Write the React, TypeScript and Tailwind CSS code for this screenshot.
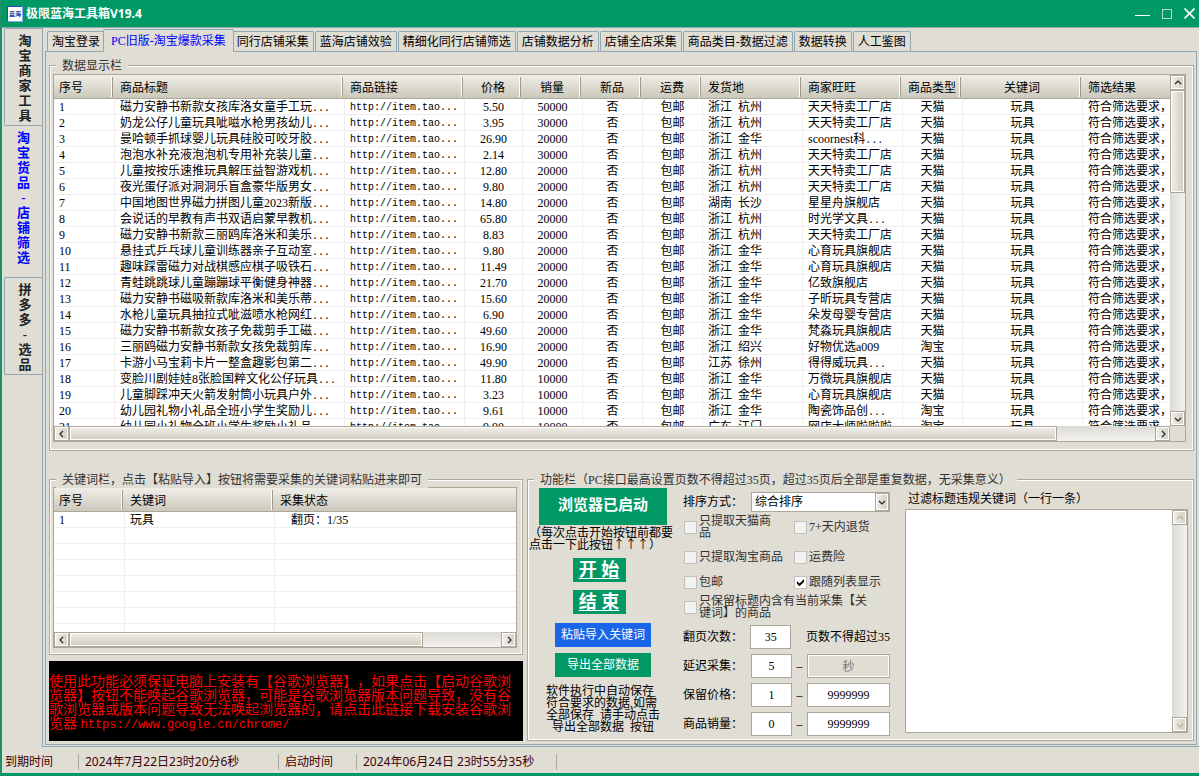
import React, { useState } from "react";
import clsx from "clsx";

const mono = "font-['Liberation_Mono','Noto_Sans_CJK_SC',monospace] text-[10px]";

const sideTabs = ["淘宝商家工具", "淘宝货品-店铺筛选", "拼多多-选品"];

const topTabs = [
  "淘宝登录",
  "PC旧版-淘宝爆款采集",
  "同行店铺采集",
  "蓝海店铺效验",
  "精细化同行店铺筛选",
  "店铺数据分析",
  "店铺全店采集",
  "商品类目-数据过滤",
  "数据转换",
  "人工鉴图",
];

const columns = [
  { name: "序号", width: "w-[61px]", align: "text-left" },
  { name: "商品标题", width: "w-[230px]", align: "text-left" },
  { name: "商品链接", width: "w-[120px]", align: "text-left" },
  { name: "价格", width: "w-[58px]", align: "text-center" },
  { name: "销量", width: "w-[60px]", align: "text-center" },
  { name: "新品", width: "w-[60px]", align: "text-center" },
  { name: "运费", width: "w-[60px]", align: "text-center" },
  { name: "发货地", width: "w-[100px]", align: "text-left" },
  { name: "商家旺旺", width: "w-[100px]", align: "text-left" },
  { name: "商品类型", width: "w-[60px]", align: "text-center" },
  { name: "关键词", width: "w-[120px]", align: "text-center" },
  { name: "筛选结果", width: "", align: "text-left" },
];

const keywordColumns = [
  { name: "序号", width: "w-[71px]", align: "text-left" },
  { name: "关键词", width: "w-[150px]", align: "text-left" },
  { name: "采集状态", width: "", align: "text-left" },
];

// title, price, sales, province, city, shop, type
const goods = [
  ["磁力安静书新款女孩库洛女童手工玩...", "5.50", "50000", "浙江", "杭州", "天天特卖工厂店", "天猫"],
  ["奶龙公仔儿童玩具呲嗞水枪男孩幼儿...", "3.95", "30000", "浙江", "杭州", "天天特卖工厂店", "天猫"],
  ["曼哈顿手抓球婴儿玩具硅胶可咬牙胶...", "26.90", "20000", "浙江", "金华", "scoornest科...", "天猫"],
  ["泡泡水补充液泡泡机专用补充装儿童...", "2.14", "30000", "浙江", "杭州", "天天特卖工厂店", "天猫"],
  ["儿童按按乐速推玩具解压益智游戏机...", "12.80", "20000", "浙江", "杭州", "天天特卖工厂店", "天猫"],
  ["夜光蛋仔派对洞洞乐盲盒豪华版男女...", "9.80", "20000", "浙江", "杭州", "天天特卖工厂店", "天猫"],
  ["中国地图世界磁力拼图儿童2023新版...", "14.80", "20000", "湖南", "长沙", "星星舟旗舰店", "天猫"],
  ["会说话的早教有声书双语启蒙早教机...", "65.80", "20000", "浙江", "杭州", "时光学文具...", "天猫"],
  ["磁力安静书新款三丽鸥库洛米和美乐...", "8.83", "20000", "浙江", "杭州", "天天特卖工厂店", "天猫"],
  ["悬挂式乒乓球儿童训练器亲子互动室...", "9.80", "20000", "浙江", "金华", "心育玩具旗舰店", "天猫"],
  ["趣味踩雷磁力对战棋感应棋子吸铁石...", "11.49", "20000", "浙江", "金华", "心育玩具旗舰店", "天猫"],
  ["青蛙跳跳球儿童蹦蹦球平衡健身神器...", "21.70", "20000", "浙江", "金华", "亿致旗舰店", "天猫"],
  ["磁力安静书磁吸新款库洛米和美乐蒂...", "15.60", "20000", "浙江", "金华", "子昕玩具专营店", "天猫"],
  ["水枪儿童玩具抽拉式呲滋喷水枪网红...", "6.90", "20000", "浙江", "金华", "朵发母婴专营店", "天猫"],
  ["磁力安静书新款女孩子免裁剪手工磁...", "49.60", "20000", "浙江", "金华", "梵淼玩具旗舰店", "天猫"],
  ["三丽鸥磁力安静书新款女孩免裁剪库...", "16.90", "20000", "浙江", "绍兴", "好物优选a009", "淘宝"],
  ["卡游小马宝莉卡片一整盒趣影包第二...", "49.90", "20000", "江苏", "徐州", "得得威玩具...", "天猫"],
  ["变脸川剧娃娃8张脸国粹文化公仔玩具...", "11.80", "10000", "浙江", "金华", "万微玩具旗舰店", "天猫"],
  ["儿童脚踩冲天火箭发射筒小玩具户外...", "3.23", "10000", "浙江", "金华", "心育玩具旗舰店", "天猫"],
  ["幼儿园礼物小礼品全班小学生奖励儿...", "9.61", "10000", "浙江", "金华", "陶瓷饰品创...", "淘宝"],
  ["幼儿园小礼物全班小学生奖励小礼品...", "9.90", "10000", "广东", "江门", "网店大师啦啦啦", "淘宝"],
];

const arrows = {
  up: "M1 5 L4 2 L7 5",
  down: "M1 3 L4 6 L7 3",
  left: "M5 1 L2 4 L5 7",
  right: "M3 1 L6 4 L3 7",
};

const names = { up: "向上滚动", down: "向下滚动", left: "向左滚动", right: "向右滚动" };

const Arrow = ({ dir, muted }: { dir: keyof typeof arrows; muted?: boolean }) => (
  <svg width="8" height="8" viewBox="0 0 8 8" fill="none" stroke={muted ? "#b5b3a8" : "#222"} strokeWidth="1.2">
    <path d={arrows[dir]} />
  </svg>
);

const ScrollButton = ({ dir, muted }: { dir: keyof typeof arrows; muted?: boolean }) => (
  <button
    aria-label={names[dir]}
    disabled={muted}
    className="flex h-[15px] w-[15px] shrink-0 items-center justify-center border border-[#aca899] bg-linear-to-r from-[#f1efe9] to-[#d2cfc3] shadow-[inset_0_0_0_1px_#fff]"
  >
    <Arrow dir={dir} muted={muted} />
  </button>
);

const HScroll = ({ thumb }: { thumb: string }) => (
  <div className="flex h-[15px] shrink-0 bg-linear-to-b from-[#dcdad4] to-[#f3f2f0]">
    <ScrollButton dir="left" />
    <div className="min-w-0 flex-1">
      <div
        className={clsx(
          "h-[15px] border border-[#aca899] bg-linear-to-b from-[#f1efe9] to-[#cfccc0] shadow-[inset_0_0_0_1px_#fff]",
          thumb
        )}
      ></div>
    </div>
    <ScrollButton dir="right" />
  </div>
);

const VScroll = ({ thumb, muted }: { thumb?: string; muted?: boolean }) => (
  <div className="flex w-[15px] shrink-0 flex-col bg-linear-to-r from-[#dcdad4] to-[#f3f2f0]">
    <ScrollButton dir="up" muted={muted} />
    <div className="min-h-0 flex-1">
      {thumb && (
        <div
          className={clsx(
            "w-[15px] border border-[#aca899] bg-linear-to-r from-[#f1efe9] to-[#cfccc0] shadow-[inset_0_0_0_1px_#fff]",
            thumb
          )}
        ></div>
      )}
    </div>
    <ScrollButton dir="down" muted={muted} />
  </div>
);

const Group = ({ title, className, children }: { title: string; className?: string; children: React.ReactNode }) => (
  <section className={clsx("relative flex flex-col border border-[#aca899]", className)}>
    <h2 className="absolute -top-2 left-1.5 bg-[#e0ddd5] px-1.5 leading-4 whitespace-nowrap text-[#333]">{title}</h2>
    <div className="flex min-h-0 flex-1 flex-col border border-white">{children}</div>
  </section>
);

const Text = ({ value }: { value: string }) => {
  if (!value.endsWith("...")) return <>{value}</>;
  return (
    <>
      {value.slice(0, -3)}
      <span className={clsx(mono, "leading-0")}>...</span>
    </>
  );
};

const TableHead = ({ cols }: { cols: typeof columns }) => (
  <thead>
    <tr>
      {cols.map((col, i) => (
        <th
          key={col.name}
          className={clsx(
            "h-6 border-b border-[#aca899] bg-linear-to-b from-[#f0eee8] to-[#cbc8bb] p-0 font-normal",
            col.width,
            col.align
          )}
        >
          <div
            className={clsx(
              "h-5 overflow-hidden pl-[5px] leading-[22px] whitespace-nowrap",
              i < cols.length - 1 && "mr-[3px] border-r border-white shadow-[1px_0_0_#9d9a8c]",
              col.align === "text-center" && "pr-[3px]"
            )}
          >
            {col.name}
          </div>
        </th>
      ))}
    </tr>
  </thead>
);

const td =
  "h-4 overflow-hidden border-r border-b border-[#efefef] p-0 pt-0.5 leading-[13px] whitespace-nowrap last:border-r-0";

const GoodsTable = () => (
  <table className="w-full table-fixed border-separate border-spacing-0">
    <TableHead cols={columns} />
    <tbody>
      {goods.map(([title, price, sales, province, city, shop, type], i) => (
        <tr key={i}>
          <td className={clsx(td, "pl-[5px]")}>{i + 1}</td>
          <td className={clsx(td, "pl-[5px]")}>
            <Text value={title} />
          </td>
          <td className={clsx(td, "pl-[5px]", mono)}>http://item.tao...</td>
          <td className={clsx(td, "text-center")}>{price}</td>
          <td className={clsx(td, "text-center")}>{sales}</td>
          <td className={clsx(td, "text-center")}>否</td>
          <td className={clsx(td, "text-center")}>包邮</td>
          <td className={clsx(td, "pl-[5px]")}>
            <div className="flex gap-1.5">
              <span>{province}</span>
              <span>{city}</span>
            </div>
          </td>
          <td className={clsx(td, "pl-[5px]")}>
            <Text value={shop} />
          </td>
          <td className={clsx(td, "text-center")}>{type}</td>
          <td className={clsx(td, "text-center")}>玩具</td>
          <td className={clsx(td, "pl-[5px]")}>符合筛选要求，</td>
        </tr>
      ))}
    </tbody>
  </table>
);

const KeywordTable = () => (
  <table className="w-full table-fixed border-separate border-spacing-0">
    <TableHead cols={keywordColumns} />
    <tbody>
      <tr>
        <td className={clsx(td, "pl-[5px]")}>1</td>
        <td className={clsx(td, "pl-[5px]")}>玩具</td>
        <td className={clsx(td, "pl-4")}>翻页：1/35</td>
      </tr>
      {[...Array(7)].map((_, i) => (
        <tr key={i}>
          <td className={td}></td>
          <td className={td}></td>
          <td className={td}></td>
        </tr>
      ))}
    </tbody>
  </table>
);

const Check = ({ checked, children, className }: { checked?: boolean; children: React.ReactNode; className?: string }) => (
  <label className={clsx("flex items-center gap-0.5 leading-3 text-[#333]", className)}>
    <span className="relative h-[13px] w-[13px] shrink-0">
      <input
        type="checkbox"
        defaultChecked={checked}
        className="peer block h-[13px] w-[13px] appearance-none border border-[#c3c1bc] bg-[#f2f2f2] checked:bg-white"
      />
      <svg
        viewBox="0 0 13 13"
        className="pointer-events-none absolute inset-0 hidden h-[13px] w-[13px] peer-checked:block"
      >
        <path d="M3 5 L5.5 7.5 L10 3 V5.8 L5.5 10.3 L3 7.8 Z" fill="#000" />
      </svg>
    </span>
    <span>{children}</span>
  </label>
);

const box = "h-6 min-w-0 border border-[#aca899] bg-white text-center";

const RangeRow = ({ label, from, to, disabled }: { label: string; from: string; to: string; disabled?: boolean }) => (
  <div className="flex items-center">
    <span className="w-[68px]">{label}：</span>
    <input aria-label={label} defaultValue={from} className={clsx(box, "w-[41px]")} />
    <span className="w-[15px] text-center">–</span>
    <input
      aria-label={label + "上限"}
      defaultValue={to}
      disabled={disabled}
      className={clsx(box, "w-[83px] disabled:bg-[#e0ddd5] disabled:text-[#777] disabled:shadow-[inset_0_0_0_1px_#fff]")}
    />
  </div>
);

const Controls = () => (
  <div className="flex w-[207px] shrink-0 flex-col">
    <div className="mt-[11px] flex items-center">
      <label htmlFor="sort" className="w-[68px]">
        排序方式：
      </label>
      <div className="relative flex-1">
        <select id="sort" className="block h-5 w-full appearance-none border border-[#aca899] bg-white pl-[3px] leading-[18px]">
          <option>综合排序</option>
        </select>
        <span className="pointer-events-none absolute top-px right-px flex h-[18px] w-[14px] items-center justify-center border border-[#aca899] bg-linear-to-r from-[#f1efe9] to-[#d2cfc3] shadow-[inset_0_0_0_1px_#fff]">
          <Arrow dir="down" />
        </span>
      </div>
    </div>
    <div className="mt-[3px] grid grid-cols-[110px_1fr] pl-px">
      <Check className="h-6">
        只提取天猫商
        <br />品
      </Check>
      <Check className="h-6">7+天内退货</Check>
      <Check className="mt-[3px] h-[30px]">只提取淘宝商品</Check>
      <Check className="mt-[3px] h-[30px]">运费险</Check>
      <Check className="h-5">包邮</Check>
      <Check checked className="h-5">
        跟随列表显示
      </Check>
      <Check className="col-span-2 mt-[3px] h-6 whitespace-nowrap">
        只保留标题内含有当前采集【关
        <br />
        键词】的商品
      </Check>
    </div>
    <div className="mt-1.5 flex flex-col gap-[5px]">
      <div className="flex items-center">
        <label htmlFor="pages" className="w-[68px]">
          翻页次数：
        </label>
        <input id="pages" defaultValue="35" className={clsx(box, "w-[41px]")} />
        <span className="ml-[15px] whitespace-nowrap">页数不得超过35</span>
      </div>
      <RangeRow label="延迟采集" from="5" to="秒" disabled />
      <RangeRow label="保留价格" from="1" to="9999999" />
      <RangeRow label="商品销量" from="0" to="9999999" />
    </div>
  </div>
);

const Actions = () => (
  <div className="flex w-[148px] shrink-0 flex-col items-center">
    <button className="mt-1.5 h-[38px] w-32 bg-[#009966] text-[15px] font-bold text-white">浏览器已启动</button>
    <p className="mt-0.5 w-full leading-3 whitespace-nowrap">
      （每次点击开始按钮前都要
      <br />
      点击一下此按钮<span className="font-['Noto_Sans_CJK_SC',sans-serif] leading-0">↑↑↑</span>）
    </p>
    <button className="mt-[7px] mr-2 h-6 w-[53px] bg-[#009966] text-lg leading-6 font-bold text-white underline underline-offset-2">
      开 始
    </button>
    <button className="mt-2 mr-2 h-6 w-[53px] bg-[#009966] text-lg leading-6 font-bold text-white underline underline-offset-2">
      结 束
    </button>
    <button className="mt-[9px] h-6 w-24 bg-[#1a66e8] text-white">粘贴导入关键词</button>
    <button className="mt-1.5 h-6 w-24 bg-[#009966] text-white">导出全部数据</button>
    <p className="mt-2 leading-3 whitespace-pre">
      {"软件执行中自动保存\n符合要求的数据,如需\n全部保存  请手动点击\n  导出全部数据  按钮"}
    </p>
  </div>
);

const App = () => {
  const [side, setSide] = useState(1);
  const [tab, setTab] = useState(1);

  return (
    <div className="flex h-screen flex-col border-b-3 border-l-2 border-b-[#009966] border-l-[#1f8f68] bg-[#e0ddd5] font-['Liberation_Serif','Noto_Sans_CJK_SC',serif] text-xs text-black [text-spacing-trim:space-all]">
      <header className="flex h-[27px] shrink-0 items-center bg-[#009966] pl-[5px] font-['Noto_Sans','Noto_Sans_CJK_SC',sans-serif] text-white">
        <svg width="16" height="16" viewBox="0 0 16 16" className="shrink-0">
          <rect width="16" height="16" fill="#8fa2f0" />
          <path d="M0 0 H16 L14 1 H1 V15 L0 16 Z" fill="#2a3fe0" />
          <rect x="1" y="1" width="14" height="14" fill="#fff" />
          <text x="2" y="10" fontSize="6" fontWeight="bold" fill="#1c2a9c">
            蓝海
          </text>
        </svg>
        <h1 className="ml-[3px] font-bold">极限蓝海工具箱V19.4</h1>
        <div className="ml-auto flex items-center gap-3 pr-1">
          <button aria-label="最小化">
            <svg width="15" height="12" viewBox="0 0 15 12">
              <path d="M0 7.5 H15" stroke="#fff" />
            </svg>
          </button>
          <button aria-label="最大化">
            <svg width="10" height="12" viewBox="0 0 10 12">
              <rect x="0.5" y="1.5" width="9" height="9" fill="none" stroke="#b9d8c8" />
            </svg>
          </button>
          <button aria-label="关闭">
            <svg width="11" height="12" viewBox="0 0 11 12">
              <path d="M0.5 0.5 L10.5 10.5 M10.5 0.5 L0.5 10.5" stroke="#fff" strokeWidth="1.6" />
            </svg>
          </button>
        </div>
      </header>

      <div className="flex min-h-0 flex-1 border-t border-[#91a7b4]">
        <nav className="flex w-10 shrink-0 flex-col items-end">
          {sideTabs.map((name, i) => (
            <button
              key={name}
              onClick={() => setSide(i)}
              className={clsx(
                "flex justify-center rounded-l-xs border-[#91a7b4] pt-1 pl-[3px] text-[13px] leading-[15px] font-bold",
                side === i
                  ? "-mr-px w-[41px] border-r border-r-[#e0ddd5] pb-3 text-[#0000ff]"
                  : "w-[38px] border-y border-l pb-0.5 text-[#222]"
              )}
            >
              <span className="w-[13px] [line-break:anywhere]">{name}</span>
            </button>
          ))}
        </nav>

        <main className="flex min-w-0 flex-1 flex-col border-b border-l border-[#91a7b4] pt-px pr-0.5 pb-px pl-0.5">
          <nav className="flex shrink-0 items-end gap-px pl-0.5">
            {topTabs.map((name, i) => (
              <button
                key={name}
                onClick={() => setTab(i)}
                className={clsx(
                  "rounded-t-xs border border-b-0 border-[#91a7b4] whitespace-nowrap",
                  tab === i
                    ? "relative -mx-[3px] -mb-px h-[23px] bg-[#e0ddd5] px-[7px] text-[#0000ff]"
                    : "h-5 px-1"
                )}
              >
                {name}
              </button>
            ))}
          </nav>

          <div className="flex min-h-0 flex-1 flex-col border border-[#91a7b4] pt-[13px] pr-0.5 pb-[3px] pl-[3px]">
            <Group title="数据显示栏" className="min-h-0 flex-1">
              <div className="mt-[7px] mr-1.5 mb-[7px] ml-0.5 flex min-h-0 flex-1 flex-col border border-[#aca899]">
                <div className="flex min-h-0 flex-1">
                  <div className="min-w-0 flex-1 overflow-hidden bg-white">
                    <GoodsTable />
                  </div>
                  <VScroll thumb="h-[32%]" />
                </div>
                <div className="pr-[15px]">
                  <HScroll thumb="w-[91%]" />
                </div>
              </div>
            </Group>

            <div className="mt-7 flex shrink-0 gap-1">
              <div className="flex w-[474px] shrink-0 flex-col gap-1.5">
                <Group title="关键词栏，点击【粘贴导入】按钮将需要采集的关键词粘贴进来即可" className="grow">
                  <div className="mt-1.5 mr-1 mb-[5px] ml-0.5 flex grow flex-col border border-[#aca899] bg-white">
                    <div className="h-0 grow overflow-hidden">
                      <KeywordTable />
                    </div>
                    <HScroll thumb="w-[82%]" />
                  </div>
                </Group>
                <p className="flex h-20 shrink-0 items-center bg-black pt-1 text-sm leading-[14px] break-all text-[#ff0000]">
                  <span>
                    使用此功能必须保证电脑上安装有【谷歌浏览器】，如果点击【启动谷歌浏览器】按钮不能唤起谷歌浏览器，可能是谷歌浏览器版本问题导致，没有谷歌浏览器或版本问题导致无法唤起浏览器的，请点击此链接下载安装谷歌浏览器{" "}
                    <a
                      href="https://www.google.cn/chrome/"
                      className="font-['Liberation_Mono',monospace] text-xs leading-0"
                    >
                      https://www.google.cn/chrome/
                    </a>
                  </span>
                </p>
              </div>

              <Group
                title="功能栏（PC接口最高设置页数不得超过35页，超过35页后全部是重复数据，无采集意义）"
                className="min-w-0 flex-1"
              >
                <div className="flex flex-1 pr-1 pb-[3px]">
                  <Actions />
                  <div className="ml-[6px] flex min-w-0 flex-1 gap-[15px]">
                    <Controls />
                    <div className="flex min-w-0 flex-1 flex-col pt-2 pb-[3px]">
                      <label htmlFor="filter" className="pl-[3px] leading-5">
                        过滤标题违规关键词（一行一条）
                      </label>
                      <div className="flex flex-1 border border-[#aca899] bg-white">
                        <textarea id="filter" className="min-w-0 flex-1 resize-none p-1 outline-none"></textarea>
                        <VScroll muted />
                      </div>
                    </div>
                  </div>
                </div>
              </Group>
            </div>
          </div>
        </main>
      </div>

      <footer className="flex h-[26px] shrink-0 items-center pt-1 font-['Noto_Sans','Noto_Sans_CJK_SC',sans-serif] leading-4 text-[#400000]">
        <span className="w-[77px] border-r border-[#aca899] pl-[3px]">到期时间</span>
        <span className="w-[200px] border-r border-[#aca899] pl-1.5">2024年7月22日23时20分6秒</span>
        <span className="w-[78px] border-r border-[#aca899] pl-1.5">启动时间</span>
        <span className="w-[200px] border-r border-[#aca899] pl-1.5">2024年06月24日 23时55分35秒</span>
      </footer>
    </div>
  );
};

export default App;
